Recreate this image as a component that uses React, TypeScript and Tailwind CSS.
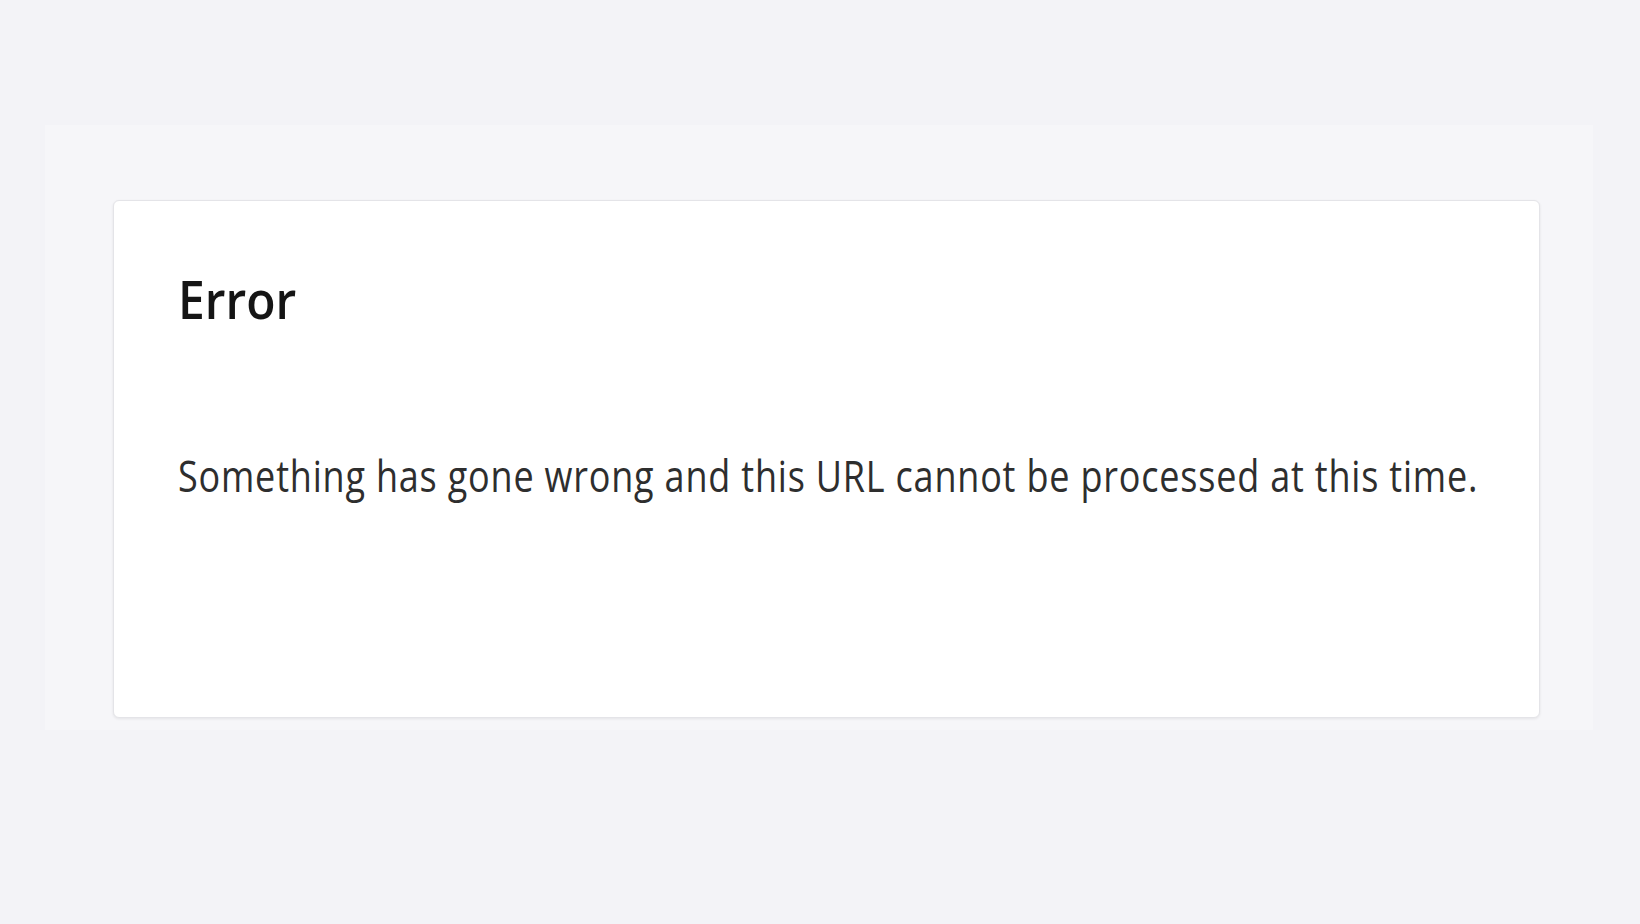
export default function App() {
  return (
    <div
      className="h-[924px] w-full bg-[#f3f3f7] pl-[45px] pt-[125px]"
      style={{ fontFamily: '"Open Sans", "Noto Sans", sans-serif' }}
    >
      <div className="h-[605px] w-[1548px] bg-[#f6f6f9] pl-[68px] pt-[75px]">
        <div className="h-[518px] w-[1427px] rounded-md border border-[#e4e4e8] bg-white px-[64px] shadow-[0_1px_3px_rgba(0,0,0,0.08)]">
          <h1 className="origin-center scale-y-[1.09] pt-[65px] text-[48px] font-semibold leading-[60px] text-[#151515]">
            Error
          </h1>
          <p className="mt-[125px] origin-center scale-y-[1.2] whitespace-nowrap text-[36px] leading-[50px] tracking-[0.8px] text-[#2e2e2e]">
            Something has gone wrong and this URL cannot be processed at this time.
          </p>
        </div>
      </div>
    </div>
  );
}
